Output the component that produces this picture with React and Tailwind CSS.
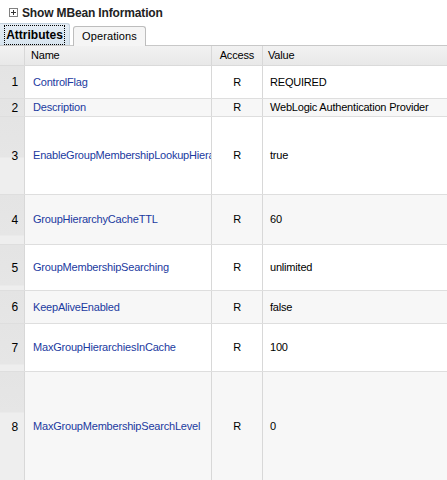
import React from "react";

const rows = [
  { n: 1, name: "ControlFlag", value: "REQUIRED", h: 33 },
  { n: 2, name: "Description", value: "WebLogic Authentication Provider", h: 18 },
  { n: 3, name: "EnableGroupMembershipLookupHierarchyCaching", value: "true", h: 78 },
  { n: 4, name: "GroupHierarchyCacheTTL", value: "60", h: 50 },
  { n: 5, name: "GroupMembershipSearching", value: "unlimited", h: 46 },
  { n: 6, name: "KeepAliveEnabled", value: "false", h: 33 },
  { n: 7, name: "MaxGroupHierarchiesInCache", value: "100", h: 48 },
  { n: 8, name: "MaxGroupMembershipSearchLevel", value: "0", h: 110 },
];

export default function App() {
  return (
    <div
      className="w-[447px] h-[480px] overflow-hidden bg-white text-[11px] text-black"
      style={{ fontFamily: '"Liberation Sans", Arial, sans-serif' }}
    >
      <div className="flex items-center h-[24px] pl-[9px] pt-[1px]">
        <div className="w-[9px] h-[9px] border border-[#808080] flex items-center justify-center relative shrink-0">
          <div className="absolute w-[5px] h-[1px] bg-[#333]" />
          <div className="absolute w-[1px] h-[5px] bg-[#333]" />
        </div>
        <span className="ml-[4px] font-bold text-[12px] tracking-[-0.15px] text-[#222]">Show MBean Information</span>
      </div>
      <div className="flex items-end h-[22px] border-b border-[#c8c8c8]">
        <div className="h-[22px] w-[70px] flex items-center justify-center rounded-tr-[3px] border-r border-t border-[#c4d2de] bg-gradient-to-b from-[#e6eef5] to-[#d6e3ee]">
          <span className="font-bold text-[12px] px-[1px] py-[3px] outline outline-1 outline-dotted outline-black leading-[12px]">Attributes</span>
        </div>
        <div className="ml-[3px] h-[20px] w-[73px] flex items-center justify-center rounded-t-[3px] border border-b-0 border-[#bdbdbd] bg-[#f5f5f5] text-[11px] tracking-[0.1px] mb-[-1px] pb-[1px]">
          Operations
        </div>
      </div>
      <div className="flex h-[20px] bg-gradient-to-b from-[#f2f2f2] to-[#e8e8e8] border-b border-[#dadada] text-[11px] tracking-[-0.2px]">
        <div className="w-[25px] shrink-0 border-r border-[#d8d8d8]" />
        <div className="w-[187px] shrink-0 border-r border-[#d8d8d8] flex items-center pl-[6px]">Name</div>
        <div className="w-[51px] shrink-0 border-r border-[#d8d8d8] flex items-center justify-end pr-[8px]">Access</div>
        <div className="flex-1 min-w-0 flex items-center pl-[5px]">Value</div>
      </div>
      {rows.map((r, i) => (
        <div
          key={r.n}
          className={`flex border-b border-[#dedede] text-[11px] tracking-[-0.2px] ${i % 2 === 1 ? "bg-[#f7f7f7]" : "bg-white"}`}
          style={{ height: r.h }}
        >
          <div className="w-[25px] shrink-0 border-r border-[#d8d8d8] flex items-center justify-end pr-[6px] text-[12px] bg-[linear-gradient(#e4e4e4,#e6e6e6_40px,#eeeeee_41px,#eeeeee)]">
            {r.n}
          </div>
          <div className="w-[187px] shrink-0 border-r border-[#d8d8d8] flex items-center pl-[8px] overflow-hidden whitespace-nowrap text-[#1b3aa0]">
            {r.name}
          </div>
          <div className="w-[51px] shrink-0 border-r border-[#d8d8d8] flex items-center justify-center">R</div>
          <div className="flex-1 min-w-0 flex items-center pl-[7px] whitespace-nowrap overflow-hidden">{r.value}</div>
        </div>
      ))}
    </div>
  );
}
